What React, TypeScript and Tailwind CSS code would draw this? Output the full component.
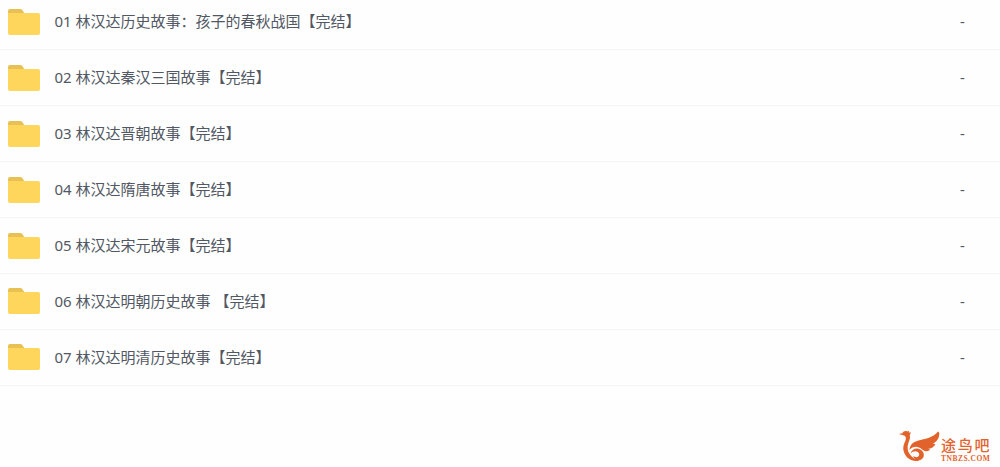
import React from 'react';

interface FolderItem {
  id: number;
  name: string;
  size: string;
}

const folders: FolderItem[] = [
  { id: 1, name: '01 林汉达历史故事：孩子的春秋战国【完结】', size: '-' },
  { id: 2, name: '02 林汉达秦汉三国故事【完结】', size: '-' },
  { id: 3, name: '03 林汉达晋朝故事【完结】', size: '-' },
  { id: 4, name: '04 林汉达隋唐故事【完结】', size: '-' },
  { id: 5, name: '05 林汉达宋元故事【完结】', size: '-' },
  { id: 6, name: '06 林汉达明朝历史故事 【完结】', size: '-' },
  { id: 7, name: '07 林汉达明清历史故事【完结】', size: '-' },
];

function FolderIcon() {
  return (
    <svg width="32" height="26" viewBox="0 0 32 26" className="shrink-0">
      <path d="M0 8V2a2 2 0 0 1 2-2h10.5a2 2 0 0 1 1.6.8L16 3.5V8z" fill="#e8c054" />
      <path d="M0 4h30a2 2 0 0 1 2 2v18a2 2 0 0 1-2 2H2a2 2 0 0 1-2-2z" fill="#ffd65c" />
    </svg>
  );
}

function BirdLogo() {
  return (
    <svg width="43" height="33" viewBox="0 0 43 33" className="shrink-0">
      {/* 头部和身体 */}
      <path
        d="M0.8 4L4.4 3.2C5.4 1.2 7.6 0.6 9.4 1.6L11 0.8L10.8 2.6L13 2.6L11.8 5C12.4 8.2 11.4 10.4 10.4 13C9 17 9.4 20.6 11.6 24C13.8 27.4 17.2 29.8 21.4 30.4C14.6 32.4 8.4 28.6 6.2 22.8C4.4 18 5.6 14.4 7.2 11.2C8.4 8.6 8.2 6.6 6.2 5.6C4.6 4.8 3 5 0.8 4Z"
        fill="#e2622c"
      />
      {/* 翅膀 */}
      <path
        d="M11.4 20C12 13.6 16.6 11.2 22.6 10C30 8.6 36 6.6 40 1.6C42.2 2.4 41.4 6.8 39.6 9.6C38.2 11.8 36.6 13 34.6 13.6L37.4 14C36.2 17.2 33.2 18.6 30.2 18.8L32.2 19.8C30 21.8 26.8 21.8 24 19.2C20 15.6 15 15.8 11.4 20Z"
        fill="#e2622c"
      />
      {/* 尾羽 */}
      <path
        d="M12.4 23.4C14 19.4 18 17.6 21.8 19.2C26.8 21.4 27.4 28 22.4 30C19 31 15.8 29.4 15.2 26C17.2 27.6 20 27.6 21 25.6C21.8 23.6 20.6 21.8 18.4 21.4C16 21.2 14 22 12.4 23.4Z"
        fill="#e2622c"
      />
    </svg>
  );
}

export default function App() {
  return (
    <div className="flex h-[467px] w-full flex-col overflow-hidden bg-[#fefefe] font-['Noto_Sans','Noto_Sans_CJK_SC',sans-serif]">
      {/* 文件夹列表 */}
      <ul className="-mt-[5.5px] shrink-0">
        {folders.map((folder) => (
          <li
            key={folder.id}
            className="flex h-[55.9px] items-center border-b border-[#f5f6f8] pl-2 text-[15px] leading-5 text-[#525863]"
          >
            <FolderIcon />
            <span className="ml-[14.5px] flex-1 whitespace-pre pb-[1.5px]">{folder.name}</span>
            <span className="w-10 shrink-0 pb-[1.5px]">{folder.size}</span>
          </li>
        ))}
      </ul>

      {/* 水印 */}
      <div className="mt-auto flex items-end self-end pr-[9px] pb-[4px] text-[#e2622c]">
        <BirdLogo />
        <div className="flex w-[50px] flex-col">
          <span className="font-['Liberation_Sans','Noto_Sans_CJK_SC',sans-serif] whitespace-nowrap text-[15px] font-medium leading-[17px] tracking-[1.7px]">
            途鸟吧
          </span>
          <span className="font-['Liberation_Serif',serif] whitespace-nowrap text-[7.5px] font-bold leading-[9px] tracking-[0.5px]">
            TNBZS.COM
          </span>
        </div>
      </div>
    </div>
  );
}
